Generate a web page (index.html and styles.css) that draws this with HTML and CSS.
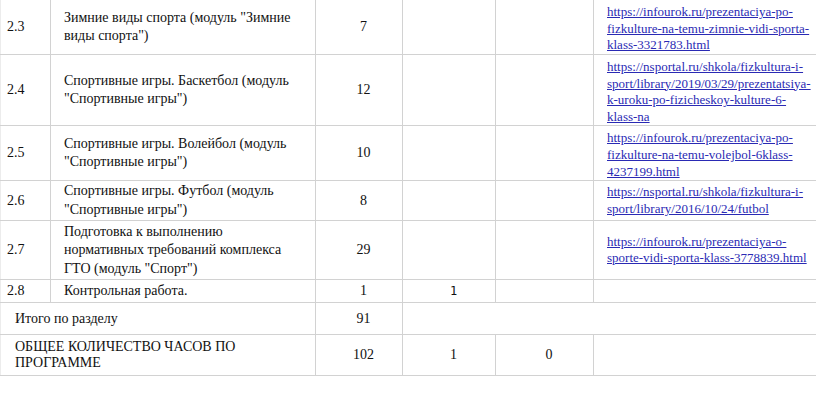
FILE: index.html
```html
<!DOCTYPE html>
<html lang="ru">
<head>
<meta charset="utf-8">
<title>Программа</title>
<link rel="stylesheet" href="styles.css">
</head>
<body>
<table class="plan">
  <colgroup>
    <col class="c-num">
    <col class="c-name">
    <col class="c-hours">
    <col class="c-ctrl">
    <col class="c-prac">
    <col class="c-res">
  </colgroup>
  <tbody>
    <tr class="r1">
      <td class="num">2.3</td>
      <td class="name">Зимние виды спорта (модуль "Зимние виды спорта")</td>
      <td class="val">7</td>
      <td class="val"></td>
      <td class="val"></td>
      <td class="res"><a href="#">https://infourok.ru/prezentaciya-po-fizkulture-na-temu-zimnie-vidi-sporta-klass-3321783.html</a></td>
    </tr>
    <tr class="r2">
      <td class="num">2.4</td>
      <td class="name">Спортивные игры. Баскетбол (модуль "Спортивные игры")</td>
      <td class="val">12</td>
      <td class="val"></td>
      <td class="val"></td>
      <td class="res"><a href="#">https://nsportal.ru/shkola/fizkultura-i-sport/library/2019/03/29/prezentatsiya-k-uroku-po-fizicheskoy-kulture-6-klass-na</a></td>
    </tr>
    <tr class="r3">
      <td class="num">2.5</td>
      <td class="name">Спортивные игры. Волейбол (модуль "Спортивные игры")</td>
      <td class="val">10</td>
      <td class="val"></td>
      <td class="val"></td>
      <td class="res"><a href="#">https://infourok.ru/prezentaciya-po-fizkulture-na-temu-volejbol-6klass-4237199.html</a></td>
    </tr>
    <tr class="r4">
      <td class="num">2.6</td>
      <td class="name">Спортивные игры. Футбол (модуль "Спортивные игры")</td>
      <td class="val">8</td>
      <td class="val"></td>
      <td class="val"></td>
      <td class="res"><a href="#">https://nsportal.ru/shkola/fizkultura-i-sport/library/2016/10/24/futbol</a></td>
    </tr>
    <tr class="r5">
      <td class="num">2.7</td>
      <td class="name">Подготовка к выполнению нормативных требований комплекса ГТО (модуль "Спорт")</td>
      <td class="val">29</td>
      <td class="val"></td>
      <td class="val"></td>
      <td class="res"><a href="#">https://infourok.ru/prezentaciya-o-sporte-vidi-sporta-klass-3778839.html</a></td>
    </tr>
    <tr class="r6">
      <td class="num">2.8</td>
      <td class="name">Контрольная работа.</td>
      <td class="val">1</td>
      <td class="val mono">1</td>
      <td class="val"></td>
      <td class="res"></td>
    </tr>
    <tr class="r7">
      <td class="total" colspan="2">Итого по разделу</td>
      <td class="val">91</td>
      <td colspan="3"></td>
    </tr>
    <tr class="r8">
      <td class="total upper" colspan="2">ОБЩЕЕ КОЛИЧЕСТВО ЧАСОВ ПО ПРОГРАММЕ</td>
      <td class="val">102</td>
      <td class="val">1</td>
      <td class="val">0</td>
      <td class="res"></td>
    </tr>
  </tbody>
</table>
</body>
</html>
```

FILE: styles.css
```css
html, body {
  margin: 0;
  padding: 0;
  background: #ffffff;
}

body {
  font-family: "Liberation Serif", "Times New Roman", serif;
  color: #111111;
}

.plan {
  width: 816px;
  border-collapse: collapse;
  table-layout: fixed;
  margin-top: -1px;
  font-size: 14px;
  line-height: 18.4px;
}

.c-num { width: 50px; }
.c-name { width: 265px; }
.c-hours { width: 87px; }
.c-ctrl { width: 93px; }
.c-prac { width: 98px; }
.c-res { width: 223px; }

.plan td {
  border: 1px solid #d2d2d2;
  padding: 0 4px 0 13px;
  vertical-align: middle;
}

.plan tr td:first-child {
  border-left-color: #ececec;
}

.plan td.num {
  padding-left: 6px;
}

.plan td.name {
  padding-right: 18px;
}

.plan td.val {
  text-align: center;
  padding: 0 4px 0 13px;
}

.plan td.mono {
  font-family: "DejaVu Sans Mono", monospace;
  font-size: 12px;
}

.plan td.res {
  padding: 4px 0 0 13px;
  font-size: 13px;
  line-height: 16.6px;
  vertical-align: top;
}

.plan tr.r4 td.res,
.plan tr.r5 td.res {
  vertical-align: middle;
  padding-top: 0;
}

.res a {
  color: #2a2ab4;
  text-decoration: underline;
  word-break: break-word;
}

.plan td.total {
  padding-left: 14px;
}

.upper {
  line-height: 16.7px;
}

.r1 { height: 55px; }
.r2 { height: 71px; }
.r3 { height: 55px; }
.r4 { height: 40px; }
.r5 { height: 59px; }
.r6 { height: 23px; }
.r7 { height: 32px; }
.r8 { height: 41px; }
```
